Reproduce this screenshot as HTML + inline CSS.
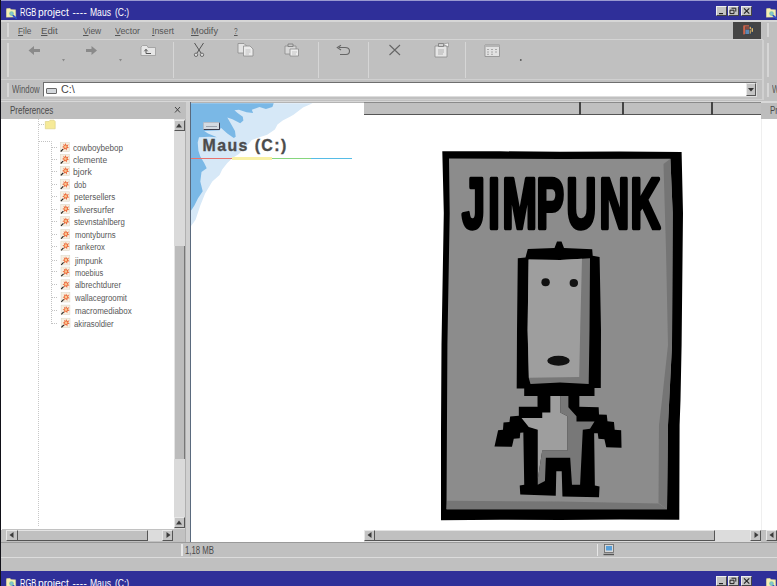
<!DOCTYPE html>
<html><head><meta charset="utf-8"><title>RGB project ---- Maus (C:)</title>
<style>
*{box-sizing:border-box;margin:0;padding:0}
html,body{width:777px;height:586px;overflow:hidden;background:#c0c0c0;font-family:"Liberation Sans","DejaVu Sans",sans-serif;}
#root{position:relative;width:777px;height:586px;overflow:hidden;background:#c0c0c0}
.abs{position:absolute}
.tb{position:absolute;left:0;width:777px;background:#2f2f99;color:#fff;font-size:10px;white-space:nowrap}
.tb span{position:absolute;left:19px}
.menu span{position:absolute;top:24px;font-size:10.5px;color:#505050;white-space:nowrap}
.menu u{text-decoration-thickness:1px;text-underline-offset:1px}
.sep{position:absolute;width:1px;background:#d6d6d6;top:42px;height:36px}
.tree span{position:absolute;font-size:8px;color:#444;white-space:nowrap;letter-spacing:.1px}
.btn{position:absolute;background:#c4c4c4;border:1px solid;border-color:#e8e8e8 #555 #555 #e8e8e8}
.tw{height:0;font-size:0}
.t{position:absolute;white-space:nowrap;line-height:1;transform-origin:0 0}
.t u{text-decoration-thickness:1px;text-underline-offset:1px}
</style></head><body><div id="root">

<!-- title bar -->
<div class="tb" style="top:0;height:20px"></div>
<div class="abs" style="left:0;top:0;width:777px;height:1px;background:#9a9ad0"></div>

<!-- menu -->
<div class="abs" style="left:1px;top:20px;width:776px;height:1.5px;background:#d6d6d6;z-index:1"></div>
<div class="abs" style="left:1px;top:20px;width:760px;height:20px;background:#c0c0c0"></div>


<!-- dark logo box in menu -->
<div class="abs" style="left:733.2px;top:22.3px;width:27.8px;height:17.3px;background:#454545"></div>
<svg class="abs" style="left:743px;top:25px" width="11" height="10" viewBox="0 0 11 10">
<rect x="0" y=".3" width="10.4" height="9.4" rx="1" fill="#3a4450"/>
<path d="M.2 1 Q.2 .3 1 .3 L6 .3 L6 1.6 L2.2 1.6 L2.2 9 L1 9.6 Q.2 9.6 .2 9 Z" fill="#d0644a"/>
<rect x="2.4" y="4.6" width="3.6" height="4.4" fill="#5c88b4"/>
<rect x="2.4" y="1.8" width="3.6" height="2.6" fill="#8a4a40"/>
<rect x="6.6" y="1.8" width="1.4" height="2.4" fill="#d8a860"/>
<rect x="8.6" y="3.2" width="1.4" height="3.6" fill="#e0b868"/>
<rect x="6.6" y="5.2" width="1.4" height="3.4" fill="#b89860"/>
</svg>

<!-- toolbar lines -->
<div class="abs" style="left:1px;top:39px;width:762px;height:1px;background:#d4d4d4"></div>
<div class="abs" style="left:1px;top:79px;width:762px;height:1px;background:#d0d0d0"></div>
<div class="abs" style="left:1px;top:99px;width:762px;height:1px;background:#d0d0d0"></div>
<div class="abs" style="left:1px;top:101px;width:776px;height:1.5px;background:#d8d8d8"></div>
<!-- grips -->
<div class="abs" style="left:7px;top:23px;width:2px;height:14px;background:#d6d6d6"></div>
<div class="abs" style="left:7px;top:43px;width:2px;height:34px;background:#d6d6d6"></div>
<div class="abs" style="left:7px;top:83px;width:2px;height:14px;background:#d6d6d6"></div>
<div class="sep" style="left:173px"></div>
<div class="sep" style="left:318px"></div>
<div class="sep" style="left:368px"></div>
<div class="sep" style="left:465px"></div>

<!-- toolbar icons -->
<svg class="abs" style="left:0;top:40px" width="777" height="40" viewBox="0 40 777 40">
<!-- back / forward arrows -->
<path d="M28.5 50.5 L34 46 L34 49 L40 49 L40 52 L34 52 L34 55 Z" fill="#8a8a8a"/>
<path d="M97 50.5 L91.5 46 L91.5 49 L86 49 L86 52 L91.5 52 L91.5 55 Z" fill="#8a8a8a"/>
<path d="M62 59 L65 59 L63.5 61.5 Z" fill="#8a8a8a"/>
<path d="M119 59 L122 59 L120.5 61.5 Z" fill="#8a8a8a"/>
<!-- up folder -->
<path d="M141 47 L141 55.5 L155.5 55.5 L155.5 47.5 L148 47.5 L147 45.5 L142.5 45.5 Z" fill="#e6e6e6" stroke="#9a9a9a" stroke-width=".8"/>
<path d="M146 49.5 L146 53.5 L151 53.5 M144.3 51.3 L146 49.3 L147.7 51.3" fill="none" stroke="#555" stroke-width="1"/>
<!-- scissors -->
<path d="M194.5 43 L201 53 M203.5 43 L197 53" stroke="#555" stroke-width="1" fill="none"/>
<circle cx="196" cy="54.8" r="1.7" fill="#ddd" stroke="#555" stroke-width=".8"/>
<circle cx="202" cy="54.8" r="1.7" fill="#ddd" stroke="#555" stroke-width=".8"/>
<!-- copy -->
<path d="M238 43.5 L244 43.5 L246.5 46 L246.5 53 L238 53 Z" fill="#e4e4e4" stroke="#8c8c8c" stroke-width=".8"/>
<path d="M243.5 46 L250 46 L253 49 L253 56 L243.5 56 Z" fill="#ececec" stroke="#8c8c8c" stroke-width=".8"/>
<path d="M245.5 50 H250.5 M245.5 52 H250.5 M245.5 54 H249" stroke="#aaa" stroke-width=".6"/>
<!-- paste -->
<path d="M285 46 L296 46 L296 54 L285 54 Z" fill="#d8d8d8" stroke="#8c8c8c" stroke-width=".8"/>
<path d="M288 44 L293 44 L293 46.5 L288 46.5 Z" fill="#c8c8c8" stroke="#777" stroke-width=".8"/>
<path d="M290 49 L298.5 49 L298.5 56 L290 56 Z" fill="#eee" stroke="#8c8c8c" stroke-width=".8"/>
<path d="M292 52 H297 M292 54 H296" stroke="#aaa" stroke-width=".6"/>
<!-- undo -->
<path d="M340 54.5 L346 54.5 Q349.5 54.5 349.5 51 Q349.5 47.5 345 47.5 L339 47.5" fill="none" stroke="#666" stroke-width="1.1"/>
<path d="M341 45.2 L337.3 47.6 L341 50" fill="none" stroke="#666" stroke-width="1.1"/>
<!-- X -->
<path d="M389.5 45 L400 55 M400 45 L389.5 55" stroke="#666" stroke-width="1.1"/>
<!-- properties -->
<path d="M435 46 L447 46 L447 57 L435 57 Z" fill="#e6e6e6" stroke="#8c8c8c" stroke-width=".8"/>
<path d="M438.5 43.5 L443.5 43.5 L443.5 46.5 L438.5 46.5 Z" fill="#d0d0d0" stroke="#777" stroke-width=".8"/>
<path d="M443 44 L448.5 43 L448.5 47 Z" fill="#f4f4f4" stroke="#888" stroke-width=".6"/>
<path d="M438 50 H444 M438 52 H444 M438 54 H443" stroke="#999" stroke-width=".7"/>
<!-- views -->
<path d="M485 45 L499.5 45 L499.5 56.5 L485 56.5 Z" fill="#e2e2e2" stroke="#8c8c8c" stroke-width=".8"/>
<path d="M485 45 H499.5 V47 H485 Z" fill="#b4b4b4"/>
<path d="M487 49.5 H489 M491 49.5 H493 M495 49.5 H497 M487 52 H489 M491 52 H493 M495 52 H497 M487 54.3 H489 M491 54.3 H493" stroke="#999" stroke-width=".8"/>
<circle cx="520.8" cy="60" r=".9" fill="#555"/>
</svg>

<!-- address bar -->
<div class="abs" style="left:43px;top:82px;width:714px;height:15px;background:#fff;border:1px solid;border-color:#6e6e6e #ddd #ddd #6e6e6e"></div>
<div class="abs" style="left:46px;top:88px;width:11px;height:6px;background:#d4d8dc;border:1px solid #6a6a6a;border-radius:1px"></div>
<div class="btn" style="left:746px;top:83px;width:10px;height:13px"></div>
<svg class="abs" style="left:748px;top:88px" width="6" height="4"><path d="M0 0 L6 0 L3 3.5 Z" fill="#333"/></svg>

<!-- window right border & second window -->
<div class="abs" style="left:761.5px;top:40px;width:2.5px;height:60px;background:#d0d0d0"></div>
<div class="abs" style="left:767px;top:43px;width:2px;height:34px;background:#d6d6d6"></div>
<div class="abs" style="left:767px;top:23px;width:2px;height:14px;background:#d6d6d6"></div>
<div class="abs" style="left:767px;top:83px;width:2px;height:14px;background:#d6d6d6"></div>


<!-- left panel -->
<div class="abs" style="left:1px;top:102px;width:185px;height:17px;background:#bebebe"></div>
<svg class="abs" style="left:174px;top:106px" width="8" height="8"><path d="M1 1 L6 6.5 M6 1 L1 6.5" stroke="#444" stroke-width="1"/></svg>
<div class="abs" style="left:1px;top:119px;width:174px;height:411px;background:#fff"></div>
<!-- v scrollbar -->
<div class="abs" style="left:174px;top:119px;width:11px;height:410px;background:#dadada"></div>
<div class="abs" style="left:174px;top:246px;width:11px;height:213px;background:#bcbcbc;border-right:1px solid #777;border-left:1px solid #e4e4e4"></div>
<div class="btn" style="left:174px;top:120px;width:11px;height:11px"></div>
<div class="btn" style="left:174px;top:517px;width:11px;height:11px"></div>
<svg class="abs" style="left:176px;top:123px" width="7" height="5"><path d="M0 4.5 L6 4.5 L3 .5 Z" fill="#3c3c3c"/></svg>
<svg class="abs" style="left:176px;top:520px" width="7" height="5"><path d="M0 4.5 L6 4.5 L3 .5 Z" fill="#3c3c3c"/></svg>
<!-- h scrollbar left -->
<div class="abs" style="left:2px;top:529px;width:183px;height:12px;background:#c2c2c2"></div>
<div class="abs" style="left:147px;top:530px;width:15px;height:11px;background:#dcdcdc"></div>
<div class="abs" style="left:17px;top:530px;width:131px;height:11px;background:#c0c0c0;border:1px solid;border-color:#e4e4e4 #555 #555 #e4e4e4"></div>
<div class="btn" style="left:6px;top:530px;width:12px;height:11px"></div>
<div class="btn" style="left:162px;top:530px;width:11px;height:11px"></div>
<svg class="abs" style="left:9px;top:532px" width="5" height="7"><path d="M4.5 0 L4.5 6 L.5 3 Z" fill="#3c3c3c"/></svg>
<svg class="abs" style="left:166px;top:532px" width="5" height="7"><path d="M.5 0 L.5 6 L4.5 3 Z" fill="#3c3c3c"/></svg>
<div class="abs" style="left:185px;top:119px;width:1px;height:423px;background:#b0b0b0"></div>
<div class="abs" style="left:186px;top:102px;width:5px;height:440px;background:#d0d0d0"></div>

<!-- tree -->
<svg class="abs" style="left:0;top:119px" width="174" height="411" viewBox="0 119 174 411">
<defs><g id="ic"><rect x="0" y="0" width="8.8" height="9.4" fill="#f6f0e2" stroke="#d9d2c2" stroke-width=".5"/>
<path d="M4.9 .8 L6.1 2.9 L8.2 2 L7 4.2 L8.5 5.7 L6.4 5.9 L6.2 8.2 L4.7 6.5 L2.9 7.8 L3.3 5.5 L1.5 4.7 L3.3 3.6 L2.7 1.5 L4.3 2.8 Z" fill="#ec6a3c"/>
<circle cx="4.9" cy="4.5" r="1.3" fill="#f8c890"/>
<path d="M.2 9.2 L2.6 6.8" stroke="#222" stroke-width="1.1"/></g></defs>
<path d="M38.5 119 V526" stroke="#c8c8c8" stroke-width="1" stroke-dasharray="1 1"/>
<path d="M39 124.5 H45" stroke="#c2c2c2" stroke-width="1" stroke-dasharray="1 1"/>
<path d="M39 141.5 H51.5 V324" fill="none" stroke="#c2c2c2" stroke-width="1" stroke-dasharray="1 1"/>
<path d="M45.3 121.5 L49 121.5 L50 120.2 L54 120.2 L55.2 121.5 L55.2 128.8 L45.3 128.8 Z" fill="#f6ea98" stroke="#d8cc80" stroke-width=".6"/>
<use href="#ic" x="60.5" y="142.3"/><path d="M52 147.5 H58" stroke="#c2c2c2" stroke-width="1" stroke-dasharray="1 1"/>
<use href="#ic" x="60.5" y="154.3"/><path d="M52 159.5 H58" stroke="#c2c2c2" stroke-width="1" stroke-dasharray="1 1"/>
<use href="#ic" x="60.6" y="166.2"/><path d="M52 171.5 H58" stroke="#c2c2c2" stroke-width="1" stroke-dasharray="1 1"/>
<use href="#ic" x="60.6" y="179.6"/><path d="M52 184.5 H58" stroke="#c2c2c2" stroke-width="1" stroke-dasharray="1 1"/>
<use href="#ic" x="60.7" y="191.8"/><path d="M52 196.5 H58" stroke="#c2c2c2" stroke-width="1" stroke-dasharray="1 1"/>
<use href="#ic" x="60.8" y="204.3"/><path d="M52 209.5 H58" stroke="#c2c2c2" stroke-width="1" stroke-dasharray="1 1"/>
<use href="#ic" x="60.8" y="216.6"/><path d="M52 221.5 H58" stroke="#c2c2c2" stroke-width="1" stroke-dasharray="1 1"/>
<use href="#ic" x="60.9" y="229.4"/><path d="M52 234.5 H58" stroke="#c2c2c2" stroke-width="1" stroke-dasharray="1 1"/>
<use href="#ic" x="60.9" y="241.1"/><path d="M52 246.5 H58" stroke="#c2c2c2" stroke-width="1" stroke-dasharray="1 1"/>
<use href="#ic" x="61.0" y="255.6"/><path d="M52 260.5 H58" stroke="#c2c2c2" stroke-width="1" stroke-dasharray="1 1"/>
<use href="#ic" x="61.0" y="267.0"/><path d="M52 271.5 H58" stroke="#c2c2c2" stroke-width="1" stroke-dasharray="1 1"/>
<use href="#ic" x="61.0" y="279.8"/><path d="M52 284.5 H58" stroke="#c2c2c2" stroke-width="1" stroke-dasharray="1 1"/>
<use href="#ic" x="61.1" y="292.6"/><path d="M52 297.5 H58" stroke="#c2c2c2" stroke-width="1" stroke-dasharray="1 1"/>
<use href="#ic" x="61.1" y="305.1"/><path d="M52 310.5 H58" stroke="#c2c2c2" stroke-width="1" stroke-dasharray="1 1"/>
<use href="#ic" x="61.2" y="318.2"/><path d="M52 323.5 H58" stroke="#c2c2c2" stroke-width="1" stroke-dasharray="1 1"/>
</svg>


<!-- right pane -->
<div class="abs" style="left:191px;top:102px;width:570px;height:440px;background:#fff;border-top:1px solid #b4b4b4"></div>
<div class="abs" style="left:189.8px;top:102px;width:1.2px;height:440px;background:#5a6a7e"></div>
<svg class="abs" style="left:191px;top:103px" width="175" height="140" viewBox="191 103 175 140">
<path d="M191.0 103.2 L312.6 103.3 L303.0 107.6 L293.5 114.7 L290.0 116.7 L282.7 120.6 L277.5 124.5 L274.9 129.6 L267.2 134.7 L259.5 137.3 L251.8 139.9 L246.6 146.3 L238.9 154.0 L232.5 157.9 L227.3 163.1 L222.2 169.5 L219.6 175.0 L212.3 181.6 L205.1 193.6 L200.3 205.5 L195.6 219.8 L191.3 225.8 L191.0 225.8 Z" fill="#d6e8f7"/>
<path d="M273.7 103.2 L272.4 107.1 L265.9 109.0 L259.5 107.1 L251.8 109.7 L253.1 112.9 L246.6 112.2 L238.9 109.7 L234.4 110.3 L237.6 112.9 L242.8 116.7 L243.4 120.6 L240.2 123.2 L232.5 119.3 L227.3 117.4 L229.9 121.9 L235.0 130.9 L235.7 136.7 L233.8 138.0 L227.3 133.5 L220.9 127.7 L219.6 130.2 L204.2 130.9 L208.0 133.5 L217.0 137.3 L209.3 136.7 L199.0 137.3 L197.7 142.5 L198.4 150.8 L200.3 156.6 L204.2 163.1 L206.7 168.2 L201.5 172.0 L200.3 181.6 L202.7 191.2 L198.0 198.3 L194.4 205.5 L191.3 210.3 L191.0 210.3 L191.0 103.2 Z" fill="#7ab8e6"/>
</svg>
<!-- drive icon -->
<div class="abs" style="left:203.3px;top:122.2px;width:16.4px;height:8px;background:#d4dae2;border:1px solid;border-color:#b4bcc8 #3a3a4a #3a3a4a #b4bcc8;border-width:1px 1.5px 1.5px 1px;border-radius:1.5px"><div style="margin:2.4px 1.5px 0;height:1.2px;background:#9aa2ae"></div></div>
<div class="abs" style="left:191px;top:158px;width:41px;height:1.2px;background:#e8726c"></div>
<div class="abs" style="left:232px;top:157.4px;width:40px;height:2.2px;background:#f9f1a6"></div>
<div class="abs" style="left:272px;top:158px;width:39px;height:1.2px;background:#86d67e"></div>
<div class="abs" style="left:311px;top:158px;width:41px;height:1.2px;background:#56bce6"></div>

<!-- list header -->
<div class="abs" style="left:364px;top:102.3px;width:397px;height:12.4px;background:#c0c0c0;border-bottom:1px solid #555;border-top:1px solid #8a8a8a"></div>
<div class="abs" style="left:579px;top:102px;width:1.5px;height:13px;background:#444"></div>
<div class="abs" style="left:622px;top:102px;width:1.5px;height:13px;background:#444"></div>
<div class="abs" style="left:711px;top:102px;width:1.5px;height:13px;background:#444"></div>
<!-- second window fragment -->
<div class="abs" style="left:761px;top:102.5px;width:16px;height:16.2px;background:#bdbdbd"></div>
<div class="abs" style="left:761px;top:118.7px;width:16px;height:411px;background:#fff"></div>

<div class="abs" style="left:761px;top:119px;width:1px;height:411px;background:#efefef"></div>
<!-- h scrollbar right -->
<div class="abs" style="left:364px;top:530px;width:397px;height:12px;background:#dcdcdc"></div>
<div class="abs" style="left:374px;top:530px;width:341px;height:11px;background:#c0c0c0;border:1px solid;border-color:#e4e4e4 #555 #555 #e4e4e4"></div>
<div class="btn" style="left:364px;top:530px;width:11px;height:11px"></div>
<div class="btn" style="left:750px;top:530px;width:11px;height:11px"></div>
<svg class="abs" style="left:367px;top:532px" width="5" height="7"><path d="M4.5 0 L4.5 6 L.5 3 Z" fill="#3c3c3c"/></svg>
<svg class="abs" style="left:754px;top:532px" width="5" height="7"><path d="M.5 0 L.5 6 L4.5 3 Z" fill="#3c3c3c"/></svg>
<div class="btn" style="left:766px;top:530px;width:11px;height:11px"></div>
<svg class="abs" style="left:769px;top:532px" width="5" height="7"><path d="M4.5 0 L4.5 6 L.5 3 Z" fill="#3c3c3c"/></svg>

<!-- status bar -->
<div class="abs" style="left:0;top:542px;width:777px;height:16px;background:#c0c0c0;border-top:1px solid #9a9a9a;border-bottom:1px solid #dcdcdc"></div>
<div class="abs" style="left:181px;top:544px;width:1.5px;height:12px;background:#e8e8e8"></div>
<div class="abs" style="left:597px;top:544px;width:1px;height:12px;background:#e6e6e6"></div>
<svg class="abs" style="left:603px;top:544px" width="12" height="12" viewBox="0 0 12 12">
<rect x="1.5" y=".5" width="9" height="8" fill="#d8d8d8" stroke="#666" stroke-width=".8"/>
<rect x="3" y="2" width="6" height="4.5" fill="#5aa0d8"/>
<path d="M.5 10.5 H11" stroke="#555" stroke-width="1.4"/></svg>

<!-- bottom title bar -->
<div class="tb" style="top:570.6px;height:16px"></div>


<!-- poster -->
<svg class="abs" style="left:430px;top:140px" width="270" height="390" viewBox="430 140 270 390">
<path d="M442.3 151.3 L500 151.3 L560 151.8 L620 151.6 L681.6 151.9 L683 213 L681.6 345 L680.5 400 L679.6 425 L679.3 519.8 L620 519.6 L560 520 L500 519.8 L441 520.3 L441 430 L441.5 345 L443.8 213 Z" fill="#000"/>
<path d="M449 158.5 L560 158.9 L670.4 158.8 L672.7 213 L672 345 L668 425 L667 509.2 L560 509.3 L446.5 509.3 L447.4 345 L449.7 213 Z" fill="#8c8c8c"/>
<path d="M670.4 158.8 L663.5 164 L666 250 L668 345 L662 400 L659 425 L658.5 503 L667 509.2 L668 425 L672 345 L672.7 213 Z" fill="#757575"/>
<path d="M446.5 509.3 L447.2 500.8 L560 501.6 L658.5 503.5 L667 509.3 Z" fill="#757575"/>
<g transform="translate(0 228) scale(0.58 1)"><text id="jp" x="796.7 841.7 866.2 925.0 976.7 1033.6 1087.1" y="0" font-family="'Liberation Sans',sans-serif" font-weight="bold" font-size="71" fill="#000" stroke="#000" stroke-width="4.5" stroke-linejoin="round">JIMPUNK</text></g>
<!-- head -->
<path d="M527.8 249 L554.5 248 L557 241.5 L561.5 241.5 L564 248 L592.2 249.2 L592.7 255.8 L599.6 256.9 L601 330 L600.8 388 L594.5 388 L594.5 396 L579.2 396 L579.2 406.7 L537.7 406.7 L537.7 396 L524.2 396 L524.2 388.6 L516.7 388.6 L517 330 L517.8 258.2 L525.5 257.4 Z" fill="#000"/>
<path d="M528.6 259.4 L560 260 L582 258.8 L590 258.3 L589.5 330 L588.7 384.1 L560 382.5 L530.5 384.1 L528.7 377.8 L527.6 330 Z" fill="#787878"/>
<path d="M528.6 259.4 L560 260 L582 258.8 L580.3 325 L579.2 377 L529 377.8 L527.6 330 Z" fill="#9e9e9e"/>
<ellipse cx="545.6" cy="282.2" rx="4.2" ry="4" fill="#111"/>
<ellipse cx="573.8" cy="283" rx="4.2" ry="4" fill="#111"/>
<ellipse cx="558.5" cy="360.8" rx="11.2" ry="5" fill="#111"/>
<!-- body -->
<g transform="translate(490 400) scale(0.18018)">
<path d="M265 -30 L265 37 L160 37 L160 88 L112 92 L108 122 L75 125 L72 165 L45 168 L25 258 L122 260 L132 215 L165 212 L168 182 L185 180 L190 470 L165 475 L168 525 L365 532 L368 395 L398 395 L402 535 L605 540 L608 480 L582 475 L578 185 L598 185 L602 215 L635 218 L645 262 L730 265 L728 168 L692 165 L688 122 L652 118 L648 82 L605 80 L603 40 L495 37 L495 -30 Z" fill="#000"/>
<path d="M390 -22 L435 -22 L435 40 L480 90 L480 120 L580 120 L555 160 L515 165 L500 470 L455 470 L445 320 L310 320 L305 450 L265 470 L265 440 L290 280 L430 280 L430 90 L390 70 Z" fill="#787878"/>
<path d="M335 -22 L390 -22 L390 70 L430 90 L430 280 L290 280 L265 440 L265 165 L215 150 L175 100 L290 100 L290 70 L335 70 Z" fill="#9e9e9e"/>
</g>
</svg>

<!-- title bar widgets -->
<div class="btn" style="left:716px;top:6.1px;width:10.6px;height:9.6px;background:#c2c2c2;border-color:#eee #444 #444 #eee"></div>
<div class="btn" style="left:728px;top:6.1px;width:10.7px;height:9.6px;background:#c2c2c2;border-color:#eee #444 #444 #eee"></div>
<div class="btn" style="left:741.1px;top:6.1px;width:10.9px;height:9.6px;background:#c2c2c2;border-color:#eee #444 #444 #eee"></div>
<svg class="abs" style="left:716px;top:6.1px" width="37" height="10" viewBox="0 0 37 10">
<path d="M3 7.6 H7" stroke="#222" stroke-width="1.2"/>
<path d="M15.5 2.2 H19.8 V5.6 M14 4.2 H18 V7.6 H14 Z" fill="none" stroke="#222" stroke-width="1"/>
<path d="M28 2.3 L33.3 7.6 M33.3 2.3 L28 7.6" stroke="#222" stroke-width="1.1"/></svg>
<svg class="abs" style="left:6px;top:7.6px" width="12" height="11" viewBox="0 0 12 11">
<path d="M.3 2 L.6 .6 L4 .3 L5 1.6 L9.6 1.8 L9.8 9 L.3 9.2 Z" fill="#f5f0b4" stroke="#dcd490" stroke-width=".4"/>
<circle cx="5.5" cy="5.6" r="2.3" fill="#7cc8b0"/><circle cx="5.5" cy="5.6" r="1" fill="#8ab8e8"/>
<path d="M7.2 7.6 L10.2 10.2" stroke="#2a50d0" stroke-width="1.6" stroke-linecap="round"/></svg>
<svg class="abs" style="left:766px;top:7.9px" width="12" height="11" viewBox="0 0 12 11">
<path d="M.3 2 L.6 .6 L4 .3 L5 1.6 L9.6 1.8 L9.8 9 L.3 9.2 Z" fill="#f5f0b4" stroke="#dcd490" stroke-width=".4"/>
<circle cx="5.5" cy="5.6" r="2.3" fill="#7cc8b0"/><circle cx="5.5" cy="5.6" r="1" fill="#8ab8e8"/>
<path d="M7.2 7.6 L10.2 10.2" stroke="#2a50d0" stroke-width="1.6" stroke-linecap="round"/></svg>
<div class="btn" style="left:716px;top:576.3px;width:10.6px;height:9.6px;background:#c2c2c2;border-color:#eee #444 #444 #eee"></div>
<div class="btn" style="left:728px;top:576.3px;width:10.7px;height:9.6px;background:#c2c2c2;border-color:#eee #444 #444 #eee"></div>
<div class="btn" style="left:741.1px;top:576.3px;width:10.9px;height:9.6px;background:#c2c2c2;border-color:#eee #444 #444 #eee"></div>
<svg class="abs" style="left:716px;top:576.3px" width="37" height="10" viewBox="0 0 37 10">
<path d="M3 7.6 H7" stroke="#222" stroke-width="1.2"/>
<path d="M15.5 2.2 H19.8 V5.6 M14 4.2 H18 V7.6 H14 Z" fill="none" stroke="#222" stroke-width="1"/>
<path d="M28 2.3 L33.3 7.6 M33.3 2.3 L28 7.6" stroke="#222" stroke-width="1.1"/></svg>
<svg class="abs" style="left:6px;top:577.5px" width="12" height="11" viewBox="0 0 12 11">
<path d="M.3 2 L.6 .6 L4 .3 L5 1.6 L9.6 1.8 L9.8 9 L.3 9.2 Z" fill="#f5f0b4" stroke="#dcd490" stroke-width=".4"/>
<circle cx="5.5" cy="5.6" r="2.3" fill="#7cc8b0"/><circle cx="5.5" cy="5.6" r="1" fill="#8ab8e8"/>
<path d="M7.2 7.6 L10.2 10.2" stroke="#2a50d0" stroke-width="1.6" stroke-linecap="round"/></svg>
<svg class="abs" style="left:766px;top:577.8px" width="12" height="11" viewBox="0 0 12 11">
<path d="M.3 2 L.6 .6 L4 .3 L5 1.6 L9.6 1.8 L9.8 9 L.3 9.2 Z" fill="#f5f0b4" stroke="#dcd490" stroke-width=".4"/>
<circle cx="5.5" cy="5.6" r="2.3" fill="#7cc8b0"/><circle cx="5.5" cy="5.6" r="1" fill="#8ab8e8"/>
<path d="M7.2 7.6 L10.2 10.2" stroke="#2a50d0" stroke-width="1.6" stroke-linecap="round"/></svg>
<!-- texts -->
<div class="tw"><span class="t" style="left:19.6px;top:8.0px;font-size:10px;color:#fff;transform:scaleX(0.748)">RGB</span> <span class="t" style="left:38.2px;top:8.0px;font-size:10px;color:#fff;transform:scaleX(1.026)">project</span> <span class="t" style="left:72.4px;top:8.0px;font-size:10px;color:#fff;letter-spacing:0.36px">----</span> <span class="t" style="left:89.9px;top:8.0px;font-size:10px;color:#fff;transform:scaleX(0.855)">Maus</span> <span class="t" style="left:115.4px;top:8.0px;font-size:10px;color:#fff;transform:scaleX(0.852)">(C:)</span></div>
<div class="tw"><span class="t" style="left:19.6px;top:579.0px;font-size:10px;color:#fff;transform:scaleX(0.748)">RGB</span> <span class="t" style="left:38.2px;top:579.0px;font-size:10px;color:#fff;transform:scaleX(1.026)">project</span> <span class="t" style="left:72.4px;top:579.0px;font-size:10px;color:#fff;letter-spacing:0.36px">----</span> <span class="t" style="left:89.9px;top:579.0px;font-size:10px;color:#fff;transform:scaleX(0.855)">Maus</span> <span class="t" style="left:115.4px;top:579.0px;font-size:10px;color:#fff;transform:scaleX(0.852)">(C:)</span></div>
<div class="t" style="left:17.6px;top:27.0px;font-size:9.2px;color:#555;transform:scaleX(0.904)"><u>F</u>ile</div>
<div class="t" style="left:41.3px;top:27.0px;font-size:9.2px;color:#555;transform:scaleX(1.053)"><u>E</u>dit</div>
<div class="t" style="left:82.8px;top:27.0px;font-size:9.2px;color:#555;transform:scaleX(0.921)"><u>V</u>iew</div>
<div class="t" style="left:114.5px;top:27.0px;font-size:9.2px;color:#555;transform:scaleX(0.959)"><u>V</u>ector</div>
<div class="t" style="left:152.0px;top:27.0px;font-size:9.2px;color:#555;transform:scaleX(0.957)"><u>I</u>nsert</div>
<div class="t" style="left:190.8px;top:27.0px;font-size:9.2px;color:#555;transform:scaleX(0.997)"><u>M</u>odify</div>
<div class="t" style="left:234.4px;top:27.0px;font-size:9.2px;color:#555;transform:scaleX(0.702)"><u>?</u></div>
<div class="t" style="left:12.0px;top:85.0px;font-size:10px;color:#555;transform:scaleX(0.776)">Window</div>
<div class="t" style="left:61.0px;top:85.0px;font-size:10px;color:#444;transform:scaleX(1.080)">C:\</div>
<div class="t" style="left:10.2px;top:106.0px;font-size:10px;color:#4a4a4a;transform:scaleX(0.803)">Preferences</div>
<div class="t" style="left:185.0px;top:546.0px;font-size:10px;color:#4a4a4a;transform:scaleX(0.779)">1,18 MB</div>
<div class="t" style="left:202.6px;top:138.0px;font-size:15.9px;color:#4c4c4c;font-weight:bold;-webkit-text-stroke:.35px #4c4c4c;letter-spacing:1.40px">Maus (C:)</div>
<div class="t" style="left:72.8px;top:144.0px;font-size:9.2px;color:#585858;transform:scaleX(0.882)">cowboybebop</div>
<div class="t" style="left:72.8px;top:156.0px;font-size:9.2px;color:#585858;transform:scaleX(0.915)">clemente</div>
<div class="t" style="left:73.0px;top:168.0px;font-size:9.2px;color:#585858;transform:scaleX(0.939)">bjork</div>
<div class="t" style="left:73.8px;top:181.0px;font-size:9.2px;color:#585858;transform:scaleX(0.802)">dob</div>
<div class="t" style="left:73.8px;top:193.0px;font-size:9.2px;color:#585858;transform:scaleX(0.869)">petersellers</div>
<div class="t" style="left:74.0px;top:206.0px;font-size:9.2px;color:#585858;transform:scaleX(0.897)">silversurfer</div>
<div class="t" style="left:74.0px;top:218.0px;font-size:9.2px;color:#585858;transform:scaleX(0.850)">stevnstahlberg</div>
<div class="t" style="left:74.5px;top:231.0px;font-size:9.2px;color:#585858;transform:scaleX(0.846)">montyburns</div>
<div class="t" style="left:74.7px;top:243.0px;font-size:9.2px;color:#585858;transform:scaleX(0.834)">rankerox</div>
<div class="t" style="left:74.7px;top:257.0px;font-size:9.2px;color:#585858;transform:scaleX(0.871)">jimpunk</div>
<div class="t" style="left:75.0px;top:269.0px;font-size:9.2px;color:#585858;transform:scaleX(0.812)">moebius</div>
<div class="t" style="left:75.0px;top:281.0px;font-size:9.2px;color:#585858;transform:scaleX(0.851)">albrechtdurer</div>
<div class="t" style="left:75.0px;top:294.0px;font-size:9.2px;color:#585858;transform:scaleX(0.849)">wallacegroomit</div>
<div class="t" style="left:75.0px;top:307.0px;font-size:9.2px;color:#585858;transform:scaleX(0.867)">macromediabox</div>
<div class="t" style="left:74.1px;top:320.0px;font-size:9.2px;color:#585858;transform:scaleX(0.843)">akirasoldier</div>
<div class="t" style="left:772.0px;top:85.0px;font-size:10px;color:#555;transform:scaleX(0.776)">Window</div>
<div class="t" style="left:770.0px;top:106.0px;font-size:10px;color:#4a4a4a;transform:scaleX(0.803)">Preferences</div>

<!-- left blue edge -->
<div class="abs" style="left:0;top:0;width:1px;height:586px;background:#111118"></div>

</div></body></html>
